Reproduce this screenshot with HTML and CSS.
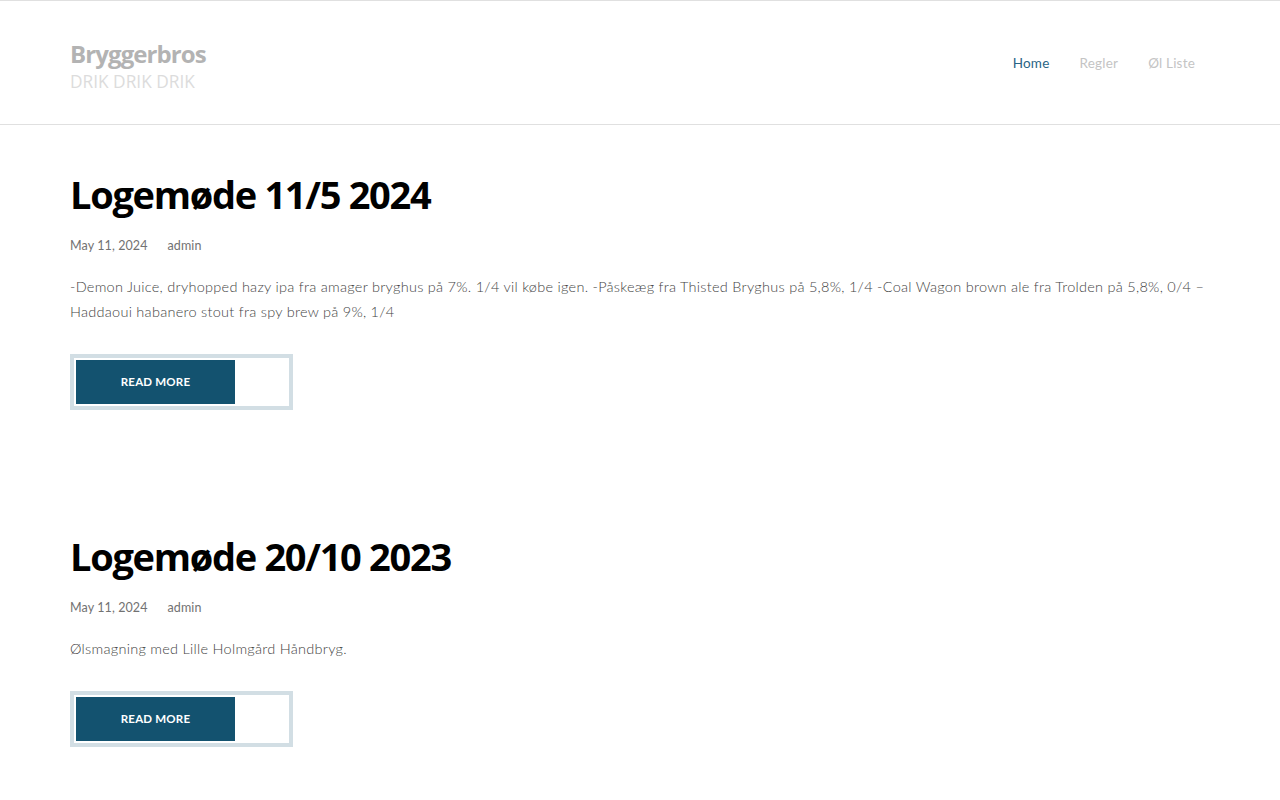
FILE: index.html
```html
<!DOCTYPE html>
<html lang="da">
<head>
<meta charset="utf-8">
<title>Bryggerbros</title>
<link rel="stylesheet" href="styles.css">
</head>
<body>
<header class="site-header">
  <div class="container header-inner">
    <div class="branding">
      <div class="site-title">Bryggerbros</div>
      <div class="site-tagline">DRIK DRIK DRIK</div>
    </div>
    <nav class="main-nav">
      <a class="nav-link active" href="#">Home</a>
      <a class="nav-link" href="#">Regler</a>
      <a class="nav-link" href="#">Øl Liste</a>
    </nav>
  </div>
</header>
<main class="container content">
  <article class="post">
    <h2 class="post-title">Logemøde 11/5 2024</h2>
    <div class="post-meta"><span>May 11, 2024</span><span>admin</span></div>
    <p class="post-excerpt">-Demon Juice, dryhopped hazy ipa fra amager bryghus på 7%. 1/4 vil købe igen. -Påskeæg fra Thisted Bryghus på 5,8%, 1/4 -Coal Wagon brown ale fra Trolden på 5,8%, 0/4 – Haddaoui habanero stout fra spy brew på 9%, 1/4</p>
    <div class="btn-frame"><a class="btn" href="#">READ MORE</a></div>
  </article>
  <article class="post">
    <h2 class="post-title">Logemøde 20/10 2023</h2>
    <div class="post-meta"><span>May 11, 2024</span><span>admin</span></div>
    <p class="post-excerpt">Ølsmagning med Lille Holmgård Håndbryg.</p>
    <div class="btn-frame"><a class="btn" href="#">READ MORE</a></div>
  </article>
</main>
</body>
</html>
```

FILE: styles.css
```css
* { box-sizing: border-box; }
html, body { margin: 0; padding: 0; background: #fff; }
body { font-family: "Lato", "Open Sans", sans-serif; color: #555; }

.container { width: 1140px; margin: 0 auto; }

.site-header {
  border-top: 1px solid #e0e0e0;
  border-bottom: 1px solid #e0e0e0;
  height: 125px;
}
.header-inner {
  height: 100%;
  display: flex;
  align-items: center;
  justify-content: space-between;
}
.branding { padding-top: 7px; }
.site-title {
  font-family: "Open Sans", sans-serif;
  font-weight: 700;
  font-size: 24px;
  line-height: 32px;
  color: #b3b3b3;
  letter-spacing: -0.9px;
}
.site-tagline {
  font-family: "Open Sans", sans-serif;
  font-size: 17.3px;
  line-height: 24px;
  color: #dcdcdc;
}
.main-nav { display: flex; gap: 30px; padding-right: 15px; }
.nav-link {
  font-family: "Lato", sans-serif;
  font-size: 13.5px;
  color: #c4c4c4;
  text-decoration: none;
  letter-spacing: 0.2px;
}
.nav-link.active { color: #2a6585; }

.content { padding-top: 45px; }
.post { margin-bottom: 122px; }
.post-title {
  margin: 0;
  font-family: "Open Sans", sans-serif;
  font-weight: 700;
  font-size: 38px;
  line-height: 48px;
  color: #000;
  letter-spacing: -1.3px;
}
.post-meta {
  margin-top: 18px;
  display: flex;
  gap: 20px;
  font-size: 12.5px;
  line-height: 20px;
  color: #727272;
  letter-spacing: 0.1px;
}
.post-excerpt {
  margin: 18px 0 0;
  font-family: "Lato", sans-serif;
  font-weight: 300;
  font-size: 14.5px;
  line-height: 25px;
  color: #444;
  letter-spacing: 0.27px;
}
.btn-frame {
  margin-top: 30px;
  display: inline-block;
  width: 223px;
  border: 4px solid #d2dee4;
  padding: 2px;
  background: #fff;
}
.btn {
  display: block;
  width: 159px;
  height: 44px;
  line-height: 44px;
  text-align: center;
  background: #13526f;
  color: #fff;
  font-family: "Lato", sans-serif;
  font-weight: 700;
  font-size: 11.5px;
  text-decoration: none;
  letter-spacing: 0.2px;
}
```
